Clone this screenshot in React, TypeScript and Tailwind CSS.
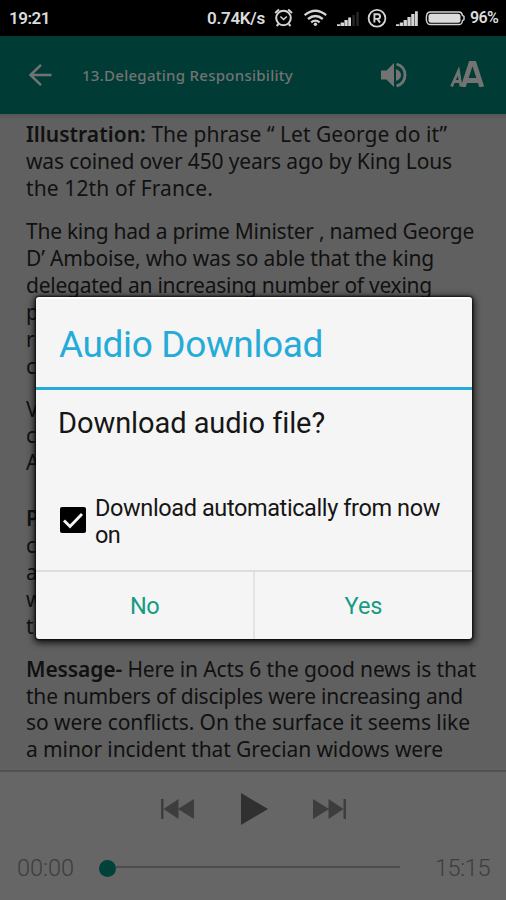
import { useLayoutEffect, useRef, useState, type ReactNode } from "react";

// Spreads a single line of text over an exact advance width.
function Fit({ width, className = "", children }: { width: number; className?: string; children: ReactNode }) {
  const ref = useRef<HTMLSpanElement>(null);
  const [spacing, setSpacing] = useState(0);
  useLayoutEffect(() => {
    const el = ref.current;
    if (!el) return;
    const count = (el.textContent ?? "").length;
    setSpacing((width - el.getBoundingClientRect().width) / count);
  }, [width]);
  return (
    <span ref={ref} className={`inline-block whitespace-pre ${className}`} style={{ letterSpacing: `${spacing}px` }}>
      {children}
    </span>
  );
}

type Line = { text: string; width?: number; bold?: string };

const paragraphs: { gap: string; lines: Line[] }[] = [
  {
    gap: "mt-0",
    lines: [
      { bold: "Illustration:", text: " The phrase “ Let George do it”", width: 421 },
      { text: "was coined over 450 years ago by King Lous", width: 426 },
      { text: "the 12th of France.", width: 187 },
    ],
  },
  {
    gap: "mt-[16.5px]",
    lines: [
      { text: "The king had a prime Minister , named George", width: 448 },
      { text: "D’ Amboise, who was so able that the king", width: 408 },
      { text: "delegated an increasing number of vexing", width: 406 },
      { text: "p" },
      { text: "r" },
      { text: "c" },
    ],
  },
  { gap: "mt-[16px]", lines: [{ text: "V" }, { text: "c" }, { text: "A" }] },
  {
    gap: "mt-[29px]",
    lines: [{ bold: "P", text: "" }, { text: "c" }, { text: "a" }, { text: "w" }, { text: "t" }],
  },
  {
    gap: "mt-[16px]",
    lines: [
      { bold: "Message-", text: " Here in Acts 6 the good news is that", width: 450 },
      { text: "the numbers of disciples were increasing and", width: 437 },
      { text: "so were conflicts. On the surface it seems like", width: 444 },
      { text: "a minor incident that Grecian widows were", width: 417 },
    ],
  },
];

function StatusBar() {
  return (
    <div className="flex h-9 items-center bg-black pl-[9px] text-[17px] font-semibold leading-9 text-[#dcdcdc]">
      <Fit width={41}>19:21</Fit>
      <Fit width={58} className="ml-[157px]">0.74K/s</Fit>
      <svg className="ml-[9px] h-9 w-[232px] shrink-0" viewBox="274 0 232 36" fill="none" stroke="#d4d4d4">
        <circle cx="283.5" cy="18" r="7.3" strokeWidth="2" />
        <path d="M280.4 16.5l3.2 3 3.2-3" strokeWidth="1.5" />
        <path d="M275.2 13l3.8-3.5M292 13l-3.8-3.5M278.5 24l-1.8 2M288.7 24l1.8 2" strokeWidth="2" />
        <path d="M304.6 15.2q10.8-8.8 21.6 0M308 19q7.4-6 14.8 0M311.2 22.3q4.2-3.4 8.4 0" strokeWidth="2.3" />
        <circle cx="315.4" cy="24.2" r="1.7" fill="#d4d4d4" stroke="none" />
        <g fill="#d4d4d4" stroke="none">
          <path d="M337 24.2h3.2V26H337zM340.6 22.5h3.4V26h-3.4zM344.4 20h3.3v6h-3.3zM348.2 17.5h2.8V26h-2.8z" />
          <path d="M352.4 15h2.3v11h-2.3zM356.4 12h2.3v14h-2.3z" fill="#292929" />
          <path d="M396 24.2h3.3V26H396zM399.8 22.5h3.3V26h-3.3zM403.6 20h3.3v6h-3.3zM407.4 17h3.3v9h-3.3zM411.2 14h3.3v12h-3.3zM415 11.3h2.8V26H415z" />
        </g>
        <circle cx="377" cy="18.3" r="8.4" strokeWidth="1.8" />
        <path d="M374.4 22.6v-8.4h3.3a2.3 2.3 0 0 1 0 4.7h-3.3m3 0l2.6 3.7" strokeWidth="1.9" />
        <path d="M430 12h29q3 0 3.4 3.3l1.6 1v3.4l-1.6 1q-.4 3.8-3.4 3.8h-29q-3.7 0-3.7-6.2T430 12z" strokeWidth="1.4" />
        <rect x="428.5" y="13.7" width="32" height="9" rx="2.5" fill="#dcdcdc" stroke="none" />
      </svg>
      <Fit width={28} className="-ml-[36px] text-[16px]">96%</Fit>
    </div>
  );
}

function AppBar() {
  return (
    <header className="flex h-[78px] items-center bg-[#003c35] text-[#737373]">
      <svg className="ml-[28px] h-6 w-6 shrink-0" viewBox="0 0 24 24" fill="none" stroke="currentColor" strokeWidth="2.5">
        <path d="M23.5 12H2.5M13 1.8L2.5 12 13 22.2" />
      </svg>
      <Fit width={211} className="ml-[30px] font-['Noto_Sans',sans-serif] text-[15px] font-medium leading-6">
        13.Delegating Responsibility
      </Fit>
      <svg className="ml-[88px] h-[26px] w-[26px] shrink-0" viewBox="0 0 26 26" fill="currentColor">
        <path d="M0 8.5h5.5L13 1v24l-7.5-7.5H0zM15 7q5 2 5 6t-5 6z" />
        <path d="M15.5 2q8.5 2.5 8.5 11t-8.5 11" fill="none" stroke="currentColor" strokeWidth="2.8" />
      </svg>
      <svg className="ml-[43px] mt-[-3px] h-[26px] w-[34px] shrink-0" viewBox="0 0 34 26" fill="none" stroke="currentColor">
        <path d="M1.5 25.5L8.5 10l2.5 15.5M4 20.5h6" strokeWidth="2.8" />
        <path d="M13.2 26L21 2h3l7.8 24M16 19.5h13" strokeWidth="4.8" />
      </svg>
    </header>
  );
}

function Article() {
  return (
    <main className="h-[656px] overflow-hidden bg-gradient-to-b from-[#555555] via-[#606060] via-[6px] to-[#606060] pl-[26px] pt-[7px] font-['Noto_Sans',sans-serif] text-[21px] leading-[26.9px] text-[#111111]">
      {paragraphs.map((p, i) => (
        <div key={i} className={p.gap}>
          {p.lines.map((line, j) => {
            const content = (
              <>
                {line.bold && <b className="font-semibold">{line.bold}</b>}
                {line.text}
              </>
            );
            return (
              <div key={j} className="h-[26.9px]">
                {line.width ? <Fit width={line.width}>{content}</Fit> : content}
              </div>
            );
          })}
        </div>
      ))}
    </main>
  );
}

function Player() {
  return (
    <footer className="h-[130px] border-t-2 border-[#515151] bg-[#666666] text-[#3d3d3d]">
      <div className="flex h-[74px] items-center pl-[161px]">
        <svg className="h-[22px] w-[33px]" viewBox="0 0 33 22" fill="currentColor">
          <path d="M0 1h2.5v20H0zM2.5 11L17.5 1v20zM17 11L33 1v20z" />
        </svg>
        <svg className="ml-[47px] h-8 w-[27px] text-[#303030]" viewBox="0 0 27 32" fill="currentColor">
          <path d="M0 0l27 16L0 32z" />
        </svg>
        <svg className="ml-[45px] h-[22px] w-[33px]" viewBox="0 0 33 22" fill="currentColor">
          <path d="M33 1h-2.5v20H33zM30.5 11L15.5 1v20zM16 11L0 1v20z" />
        </svg>
      </div>
      <div className="flex h-11 items-center pl-[17px] text-[23.5px] leading-[44px]">
        <Fit width={57} className="font-light">00:00</Fit>
        <div className="ml-[25px] h-[17px] w-[17px] rounded-full bg-[#004238]" />
        <div className="mb-[3px] h-[2px] w-[284px] bg-[#4c4c4c]" />
        <Fit width={55} className="ml-[35px] font-light">15:15</Fit>
      </div>
    </footer>
  );
}

function Dialog() {
  return (
    <section className="flex h-[342px] w-[436px] flex-col rounded-[3px] border-t-2 border-white bg-[#f5f5f5] shadow-[0_2px_7px_2px_rgba(0,0,0,0.8),0_0_2px_1px_rgba(0,0,0,0.65)]">
      <h1 className="h-[91px] shrink-0 border-b-[3px] border-[#24abd9] pl-[23px] text-[37px] leading-[91px] text-[#24abd9]">
        <Fit width={264}>Audio Download</Fit>
      </h1>
      <p className="h-[68px] shrink-0 pl-[22px] text-[29px] leading-[66px] text-[#161616]">
        <Fit width={266}>Download audio file?</Fit>
      </p>
      <label className="flex h-[112px] shrink-0 items-start pl-[24px] pt-[37px] text-[23.5px] leading-[26.5px] text-[#161616]">
        <svg className="mt-[12px] h-[26px] w-[26px]" viewBox="0 0 26 26">
          <rect width="26" height="26" rx="2" fill="#000" />
          <path d="M4 13.5l6 6L22 7" fill="none" stroke="#f5f5f5" strokeWidth="2.9" />
        </svg>
        <span className="ml-[9px] flex flex-col items-start">
          <Fit width={345}>Download automatically from now</Fit>
          <Fit width={25}>on</Fit>
        </span>
      </label>
      <div className="flex h-[69px] shrink-0 border-t-2 border-[#dddddd] text-[23.5px] leading-[66px] text-[#169b83]">
        <button className="w-[219px] border-r-2 border-[#e3e3e3] pt-px"><Fit width={29}>No</Fit></button>
        <button className="flex-1 pt-px"><Fit width={38}>Yes</Fit></button>
      </div>
    </section>
  );
}

export default function App() {
  return (
    <div className="relative h-[900px] w-[506px] overflow-hidden bg-black font-['Roboto',sans-serif]">
      <StatusBar />
      <AppBar />
      <Article />
      <Player />
      <div className="absolute inset-0 flex items-start pl-[36px] pt-[297px]">
        <Dialog />
      </div>
    </div>
  );
}
